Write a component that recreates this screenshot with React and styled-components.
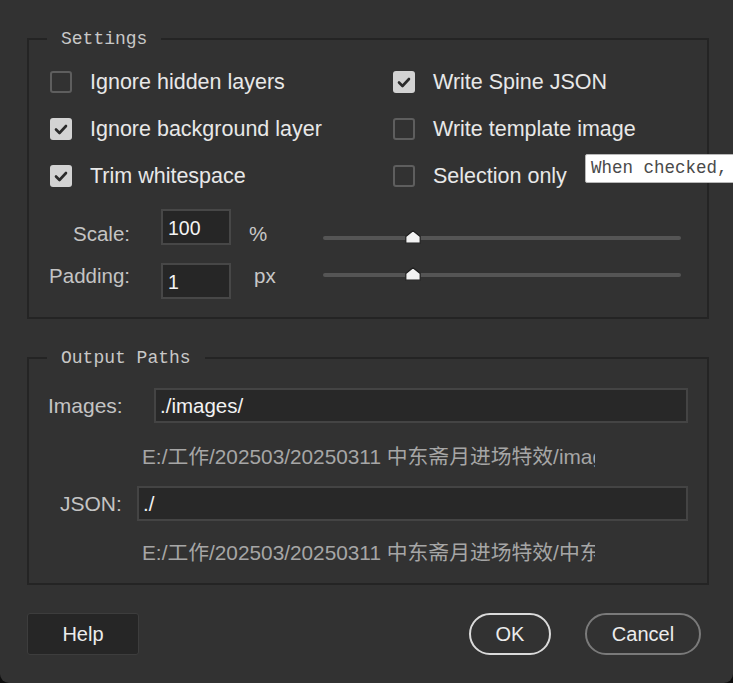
import React from 'react'
import styled, { createGlobalStyle } from 'styled-components'

const GlobalStyle = createGlobalStyle`
    html, body {
        margin: 0;
        padding: 0;
        background: #0e0e0e;
    }
`

const settingsLeft = [
    { label: 'Ignore hidden layers', checked: false },
    { label: 'Ignore background layer', checked: true },
    { label: 'Trim whitespace', checked: true },
]

const settingsRight = [
    { label: 'Write Spine JSON', checked: true },
    { label: 'Write template image', checked: false },
    { label: 'Selection only', checked: false },
]

const CheckBox = ({ checked, label }) => (
    <CheckItem>
        <Box $checked={checked}>
            {checked && (
                <svg width="22" height="22" viewBox="0 0 22 22">
                    <polyline points="6,11.5 9.5,15 16,8" fill="none" stroke="#2b2b2b" strokeWidth="2.6" strokeLinecap="round" strokeLinejoin="round" />
                </svg>
            )}
        </Box>
        <span>{label}</span>
    </CheckItem>
)

const Slider = ({ value, max }) => {
    const left = (value / max) * (358 - 16)
    return (
        <Track>
            <Thumb style={{ left }} width="16" height="14" viewBox="0 0 16 14">
                <path d="M8 0.8 L15.2 6.5 L15.2 13.2 L0.8 13.2 L0.8 6.5 Z" fill="#f2f2f2" stroke="#1e1e1e" strokeWidth="1.2" strokeLinejoin="round" />
            </Thumb>
        </Track>
    )
}

const App = () => {
    return (
        <Dialog>
            <GlobalStyle />
            <Group>
                <Legend>Settings</Legend>
                <CheckGrid>
                    {settingsLeft.map((item, i) => (
                        <React.Fragment key={item.label}>
                            <CheckBox {...item} />
                            <CheckBox {...settingsRight[i]} />
                        </React.Fragment>
                    ))}
                </CheckGrid>
                <ParamRow $first>
                    <ParamLabel $top={13}>Scale:</ParamLabel>
                    <SmallInput>100</SmallInput>
                    <Unit $top={13} $pad={18}>%</Unit>
                    <SliderCell $top={22}>
                        <Slider value={24} max={100} />
                    </SliderCell>
                </ParamRow>
                <ParamRow>
                    <ParamLabel $top={1}>Padding:</ParamLabel>
                    <SmallInput>1</SmallInput>
                    <Unit $top={1} $pad={23}>px</Unit>
                    <SliderCell $top={5}>
                        <Slider value={24} max={100} />
                    </SliderCell>
                </ParamRow>
            </Group>

            <Group $second>
                <Legend>Output Paths</Legend>
                <PathRow $indent={19} $first>
                    <PathLabel $width={106}>Images:</PathLabel>
                    <PathInput>./images/</PathInput>
                </PathRow>
                <Resolved $top={22}>E:/工作/202503/20250311 中东斋月进场特效/images/</Resolved>
                <PathRow $indent={31}>
                    <PathLabel $width={77}>JSON:</PathLabel>
                    <PathInput>./</PathInput>
                </PathRow>
                <Resolved $top={20}>E:/工作/202503/20250311 中东斋月进场特效/中东斋月进场特效.json</Resolved>
            </Group>

            <Buttons>
                <HelpButton>Help</HelpButton>
                <Spacer />
                <PillButton $primary>OK</PillButton>
                <PillButton>Cancel</PillButton>
            </Buttons>

            <Tooltip>When checked, only the selected layers are exported.</Tooltip>
        </Dialog>
    )
}

const Dialog = styled.div`
    position: relative;
    width: 733px;
    height: 683px;
    box-sizing: border-box;
    padding: 28px 24px 0 27px;
    background: #323232;
    border-radius: 0 0 9px 9px;
    overflow: hidden;
    font-family: "Liberation Sans", "Noto Sans CJK SC", sans-serif;
    color: #e6e6e6;
`

const Group = styled.fieldset`
    margin: ${props => props.$second ? '28px 0 0' : '0'};
    padding: 0 0 18px;
    min-width: 0;
    border: 2px solid #242424;
`

const Legend = styled.legend`
    margin-left: 18px;
    padding: 0 14px;
    font-family: "Liberation Mono", monospace;
    font-size: 18px;
    line-height: 22px;
    color: #c8c8c8;
`

const CheckGrid = styled.div`
    display: grid;
    grid-template-columns: 343px 1fr;
    grid-auto-rows: 22px;
    row-gap: 25px;
    padding: 21px 0 0 21px;
`

const CheckItem = styled.label`
    display: flex;
    align-items: center;
    gap: 18px;
    font-size: 21.5px;
    line-height: 22px;
    color: #e8e8e8;
    white-space: nowrap;
`

const Box = styled.span`
    flex: none;
    width: 22px;
    height: 22px;
    box-sizing: border-box;
    border-radius: 3px;
    border: ${props => props.$checked ? 'none' : '2px solid #5e5e5e'};
    background: ${props => props.$checked ? '#d3d3d3' : 'transparent'};

    svg {
        display: block;
    }
`

const ParamRow = styled.div`
    display: grid;
    grid-template-columns: 132px 70px 92px 358px;
    align-items: start;
    height: 36px;
    margin-top: ${props => props.$first ? '22px' : '18px'};
`

const ParamLabel = styled.span`
    margin-top: ${props => props.$top}px;
    padding-right: 31px;
    text-align: right;
    font-size: 20.5px;
    line-height: 24px;
    color: #c4c4c4;
`

const SmallInput = styled.div`
    height: 36px;
    box-sizing: border-box;
    padding: 4px 5px 0;
    border: 2px solid #474747;
    background: #262626;
    font-size: 19.5px;
    line-height: 26px;
    color: #f4f4f4;
`

const Unit = styled.span`
    margin-top: ${props => props.$top}px;
    padding-left: ${props => props.$pad}px;
    font-size: 20.5px;
    line-height: 24px;
    color: #c8c8c8;
`

const SliderCell = styled.div`
    margin-top: ${props => props.$top}px;
    height: 14px;
    display: flex;
    align-items: center;
`

const Track = styled.div`
    position: relative;
    width: 100%;
    height: 4px;
    border-radius: 2px;
    background: #555555;
`

const Thumb = styled.svg`
    position: absolute;
    top: -6px;
    display: block;
`

const PathRow = styled.div`
    display: flex;
    align-items: center;
    height: 35px;
    margin-top: ${props => props.$first ? '19px' : '17px'};
    padding: 0 19px 0 ${props => props.$indent}px;
`

const PathLabel = styled.span`
    flex: none;
    width: ${props => props.$width}px;
    font-size: 21px;
    color: #c4c4c4;
`

const PathInput = styled.div`
    flex: 1;
    height: 35px;
    box-sizing: border-box;
    padding: 0 4px;
    border: 2px solid #444444;
    background: #282828;
    font-size: 20.5px;
    line-height: 31px;
    color: #f2f2f2;
`

const Resolved = styled.div`
    width: 453px;
    margin: ${props => props.$top}px 0 0 113px;
    overflow: hidden;
    white-space: nowrap;
    font-size: 20.8px;
    line-height: 24px;
    color: #a6a6a6;
`

const Buttons = styled.div`
    display: flex;
    align-items: center;
    gap: 34px;
    margin: 28px 8px 0 0;
`

const Spacer = styled.div`
    flex: 1;
`

const HelpButton = styled.button`
    width: 112px;
    height: 42px;
    border: 1px solid #3d3d3d;
    border-radius: 3px;
    background: #262626;
    font-family: inherit;
    font-size: 20px;
    color: #ececec;
`

const PillButton = styled.button`
    width: ${props => props.$primary ? '82px' : '116px'};
    height: 42px;
    padding: 0;
    border: 2px solid ${props => props.$primary ? '#dadada' : '#7a7a7a'};
    border-radius: 21px;
    background: transparent;
    font-family: inherit;
    font-size: 20px;
    color: #ececec;
`

const Tooltip = styled.div`
    position: absolute;
    left: 585px;
    top: 154px;
    height: 29px;
    box-sizing: border-box;
    padding: 0 6px 0 5px;
    border: 1px solid #b8b8b8;
    border-radius: 2px;
    background: #ffffff;
    white-space: nowrap;
    font-family: "Liberation Mono", monospace;
    font-size: 17.5px;
    line-height: 27px;
    color: #4a4a4a;
`

export default App
